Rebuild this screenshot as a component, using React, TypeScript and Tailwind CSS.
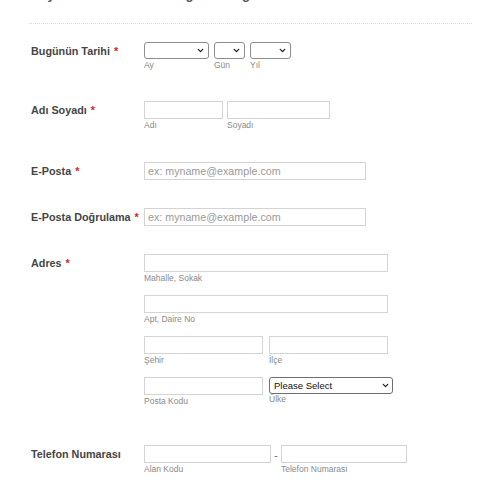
import { ChevronDown } from 'lucide-react'
import type { ReactNode } from 'react'

const font = { fontFamily: '"Liberation Sans", Arial, sans-serif' }

function Label({ text, required = true }: { text: string; required?: boolean }) {
  return (
    <div className="w-[115px] shrink-0 pl-[2px] pt-[2px] whitespace-nowrap text-[10.8px] leading-[14px] font-bold text-[#454545]">
      {text}
      {required && <span className="text-[#e0201b] ml-[4px]">*</span>}
    </div>
  )
}

function Sub({ children, className = 'mt-[1px]' }: { children: ReactNode; className?: string }) {
  return <div className={`text-[8.5px] leading-[10px] text-[#8a8a8a] whitespace-nowrap ${className}`}>{children}</div>
}

function TextInput({ w, placeholder }: { w: string; placeholder?: string }) {
  return (
    <input
      placeholder={placeholder}
      className={`block ${w} h-[18px] border border-[#d4d4d4] bg-white px-[3px] text-[10.7px] leading-[16px] text-[#333] placeholder:text-[#9a9a9a] outline-none`}
    />
  )
}

function DateSelect({ w }: { w: string }) {
  return (
    <div className={`relative ${w} h-[17px]`}>
      <select className="block appearance-none w-full h-[17px] border border-[#8d8d8d] rounded-[3px] bg-white" />
      <ChevronDown size={9} strokeWidth={3.5} className="absolute right-[4px] top-[4px] text-[#222] pointer-events-none" />
    </div>
  )
}

function Field({ w, label }: { w: string; label: string }) {
  return (
    <div className={w}>
      <TextInput w="w-full" />
      <Sub>{label}</Sub>
    </div>
  )
}

export default function App() {
  return (
    <div className="w-[500px] h-[484px] overflow-hidden bg-white text-[10px] leading-none" style={font}>
      <div className="pl-[29px] pr-[28px]">
        {/* page title scrolled almost out of view */}
        <div className="h-[3px] overflow-hidden flex items-end pl-[2px]">
          <div className="text-[13px] leading-[16px] font-bold text-[#555] whitespace-nowrap">Kayıt Formu — Lütfen bilgilerinizi girin</div>
        </div>
        <div className="mt-[20px] border-t border-dotted border-[#d9d9d9]" />

        {/* Bugünün Tarihi */}
        <div className="flex mt-[18px]">
          <Label text="Bugünün Tarihi" />
          <div className="flex gap-[5px]">
            <div>
              <DateSelect w="w-[65px]" />
              <Sub>Ay</Sub>
            </div>
            <div>
              <DateSelect w="w-[31px]" />
              <Sub>Gün</Sub>
            </div>
            <div>
              <DateSelect w="w-[41px]" />
              <Sub>Yıl</Sub>
            </div>
          </div>
        </div>

        {/* Adı Soyadı */}
        <div className="flex mt-[31px]">
          <Label text="Adı Soyadı" />
          <div className="flex gap-[4px]">
            <Field w="w-[79px]" label="Adı" />
            <Field w="w-[103px]" label="Soyadı" />
          </div>
        </div>

        {/* E-Posta */}
        <div className="flex mt-[32px]">
          <Label text="E-Posta" />
          <TextInput w="w-[222px]" placeholder="ex: myname@example.com" />
        </div>

        <div className="flex mt-[28px]">
          <Label text="E-Posta Doğrulama" />
          <TextInput w="w-[222px]" placeholder="ex: myname@example.com" />
        </div>

        {/* Adres */}
        <div className="flex mt-[28px]">
          <Label text="Adres" />
          <div className="flex flex-col gap-[12px] w-[250px]">
            <Field w="w-[244px]" label="Mahalle, Sokak" />
            <Field w="w-[244px]" label="Apt, Daire No" />
            <div className="flex gap-[6px]">
              <Field w="w-[119px]" label="Şehir" />
              <Field w="w-[119px]" label="İlçe" />
            </div>
            <div className="flex gap-[6px]">
              <Field w="w-[119px]" label="Posta Kodu" />
              <div className="w-[124px]">
                <div className="relative h-[17px]">
                  <select className="block appearance-none w-full h-[17px] border border-[#6f6f6f] rounded-[3px] bg-white pl-[4px] text-[9.5px] text-[#111]">
                    <option>Please Select</option>
                  </select>
                  <ChevronDown size={9} strokeWidth={3.5} className="absolute right-[3px] top-[4px] text-[#222] pointer-events-none" />
                </div>
                <Sub className="mt-0">Ülke</Sub>
              </div>
            </div>
          </div>
        </div>

        {/* Telefon */}
        <div className="flex mt-[39px]">
          <Label text="Telefon Numarası" required={false} />
          <div className="flex">
            <Field w="w-[127px]" label="Alan Kodu" />
            <div className="w-[10px] text-center text-[10px] leading-[18px] text-[#666] pt-[2px]">-</div>
            <Field w="w-[126px]" label="Telefon Numarası" />
          </div>
        </div>
      </div>
    </div>
  )
}
